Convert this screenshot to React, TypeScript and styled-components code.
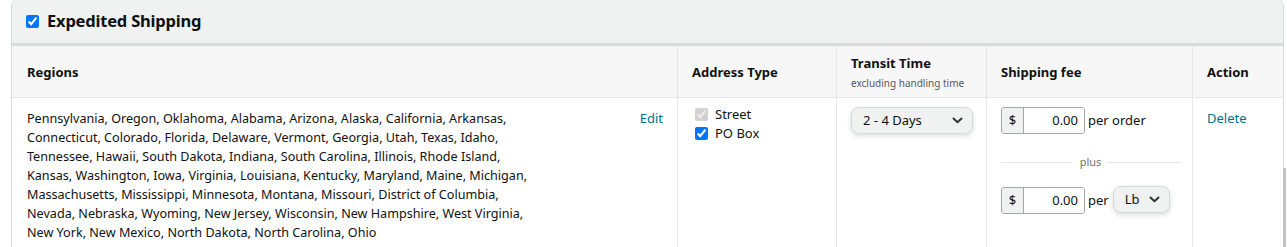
import React from 'react';
import styled, { createGlobalStyle } from 'styled-components';

const GlobalStyle = createGlobalStyle`
	body {
		margin: 0;
		background: #fff;
		font-family: "Noto Sans", "Open Sans", Arial, sans-serif;
		color: #0f1111;
		overflow: hidden;
	}
`;

const Page = styled.div`
	position: relative;
	width: 1287px;
	height: 247px;
	overflow: hidden;
`;

const Card = styled.div`
	margin: -2px 0 0 11px;
	width: 1271px;
	border: 1px solid #d5d9d9;
	border-radius: 8px 8px 0 0;
	overflow: hidden;
	background: #fff;
`;

const CardHeader = styled.div`
	display: flex;
	align-items: center;
	gap: 8px;
	height: 47px;
	padding: 0 14px 0 14px;
	box-sizing: border-box;
	background: #f0f1f1;
	border-bottom: 3px solid #d9dbdb;
`;

const Check = styled.input`
	width: 13px;
	height: 13px;
	margin: 0;
	flex-shrink: 0;
`;

const Title = styled.h2`
	margin: 0;
	font-size: 16.5px;
	font-weight: 700;
	line-height: 24px;
	letter-spacing: -0.2px;
`;

const Grid = styled.div`
	display: grid;
	grid-template-columns: 665px 159px 150px 206px 1fr;
`;

const HeadCell = styled.div<{ $first?: boolean }>`
	height: 51px;
	padding: 0 14px 0 ${(p) => (p.$first ? '15px' : '14px')};
	display: flex;
	flex-direction: column;
	justify-content: center;
	background: #f7f7f7;
	border-bottom: 1px solid #e3e6e6;
	border-left: ${(p) => (p.$first ? 'none' : '1px solid #e7e7e7')};
	font-size: 13px;
	font-weight: 700;
	line-height: 18px;
`;

const SubHead = styled.span`
	font-size: 10px;
	font-weight: 400;
	color: #565959;
	line-height: 14px;
	margin-top: 4px;
`;

const Cell = styled.div<{ $first?: boolean }>`
	padding: 11px 14px 14px ${(p) => (p.$first ? '15px' : '14px')};
	border-left: ${(p) => (p.$first ? 'none' : '1px solid #e7e7e7')};
	font-size: 13px;
	line-height: 19px;
	min-height: 160px;
`;

const RegionWrap = styled.div`
	display: flex;
	justify-content: space-between;
	align-items: flex-start;
`;

const RegionText = styled.div`
	width: 520px;
	font-size: 12.6px;
`;

const Line = styled.span`
	display: block;
	white-space: nowrap;
`;

const Link = styled.a`
	color: #007185;
	text-decoration: none;
	font-size: 13px;
	line-height: 19px;
	cursor: pointer;
`;

const CheckList = styled.div`
	margin-top: -4px;
`;

const CheckRow = styled.label`
	display: flex;
	align-items: center;
	gap: 7px;
	height: 19px;
	padding-left: 3px;
	font-size: 13px;
`;

const SelectBox = styled.div<{ $w: number }>`
	display: flex;
	align-items: center;
	justify-content: space-between;
	width: ${(p) => p.$w}px;
	height: 27px;
	box-sizing: border-box;
	padding: 0 9px 0 11px;
	margin-top: -2px;
	background: #f0f2f2;
	border: 1px solid #d5d9d9;
	border-radius: 8px;
	box-shadow: 0 2px 5px rgba(15, 17, 17, 0.15);
	font-size: 13px;
	color: #0f1111;
`;

const FeeRow = styled.div`
	display: flex;
	align-items: center;
	gap: 4px;
	margin-top: -2px;
`;

const InputGroup = styled.div`
	display: flex;
	height: 27px;
	box-sizing: border-box;
	border: 1px solid #a6a6a6;
	border-radius: 3px;
	overflow: hidden;
`;

const Addon = styled.span`
	width: 21px;
	display: flex;
	align-items: center;
	justify-content: center;
	background: #f0f2f2;
	border-right: 1px solid #a6a6a6;
	font-size: 13px;
`;

const Amount = styled.span`
	width: 60px;
	box-sizing: border-box;
	padding-right: 6px;
	display: flex;
	align-items: center;
	justify-content: flex-end;
	background: #fff;
	font-size: 13px;
`;

const Unit = styled.span`
	margin-left: -1px;
`;

const Divider = styled.div`
	display: flex;
	align-items: center;
	gap: 7px;
	margin: 21px 0 20px;
	width: 179px;
	font-size: 11px;
	line-height: 14px;
	color: #6f7373;

	&::before,
	&::after {
		content: '';
		flex: 1;
		height: 1px;
		background: #e3e6e6;
	}
`;

const ScrollThumb = styled.div`
	position: absolute;
	right: 1px;
	top: 168px;
	width: 3px;
	height: 90px;
	background: #c4c4c4;
`;

const Chevron = () => (
	<svg width="11" height="7" viewBox="0 0 11 7">
		<path d="M1.5 1.5 L5.5 5.2 L9.5 1.5" fill="none" stroke="#333" strokeWidth="2" strokeLinecap="round" strokeLinejoin="round" />
	</svg>
);

const regionLines = [
	'Pennsylvania, Oregon, Oklahoma, Alabama, Arizona, Alaska, California, Arkansas,',
	'Connecticut, Colorado, Florida, Delaware, Vermont, Georgia, Utah, Texas, Idaho,',
	'Tennessee, Hawaii, South Dakota, Indiana, South Carolina, Illinois, Rhode Island,',
	'Kansas, Washington, Iowa, Virginia, Louisiana, Kentucky, Maryland, Maine, Michigan,',
	'Massachusetts, Mississippi, Minnesota, Montana, Missouri, District of Columbia,',
	'Nevada, Nebraska, Wyoming, New Jersey, Wisconsin, New Hampshire, West Virginia,',
	'New York, New Mexico, North Dakota, North Carolina, Ohio',
];

function Fee(props: { unit: React.ReactNode }) {
	return (
		<FeeRow>
			<InputGroup>
				<Addon>$</Addon>
				<Amount>0.00</Amount>
			</InputGroup>
			{props.unit}
		</FeeRow>
	);
}

export default function App() {
	return (
		<Page>
			<GlobalStyle />
			<Card>
				<CardHeader>
					<Check type="checkbox" defaultChecked />
					<Title>Expedited Shipping</Title>
				</CardHeader>
				<Grid>
					<HeadCell $first>Regions</HeadCell>
					<HeadCell>Address Type</HeadCell>
					<HeadCell>
						<span>Transit Time</span>
						<SubHead>excluding handling time</SubHead>
					</HeadCell>
					<HeadCell>Shipping fee</HeadCell>
					<HeadCell>Action</HeadCell>

					<Cell $first>
						<RegionWrap>
							<RegionText>
								{regionLines.map((l) => (
									<Line key={l}>{l}</Line>
								))}
							</RegionText>
							<Link>Edit</Link>
						</RegionWrap>
					</Cell>
					<Cell>
						<CheckList>
							<CheckRow>
								<Check type="checkbox" defaultChecked disabled />
								Street
							</CheckRow>
							<CheckRow>
								<Check type="checkbox" defaultChecked />
								PO Box
							</CheckRow>
						</CheckList>
					</Cell>
					<Cell>
						<SelectBox $w={122}>
							<span>2 - 4 Days</span>
							<Chevron />
						</SelectBox>
					</Cell>
					<Cell>
						<Fee unit={<Unit>per order</Unit>} />
						<Divider>plus</Divider>
						<Fee
							unit={
								<>
									<Unit>per</Unit>
									<SelectBox $w={57}>
										<span>Lb</span>
										<Chevron />
									</SelectBox>
								</>
							}
						/>
					</Cell>
					<Cell>
						<Link>Delete</Link>
					</Cell>
				</Grid>
			</Card>
			<ScrollThumb />
		</Page>
	);
}
